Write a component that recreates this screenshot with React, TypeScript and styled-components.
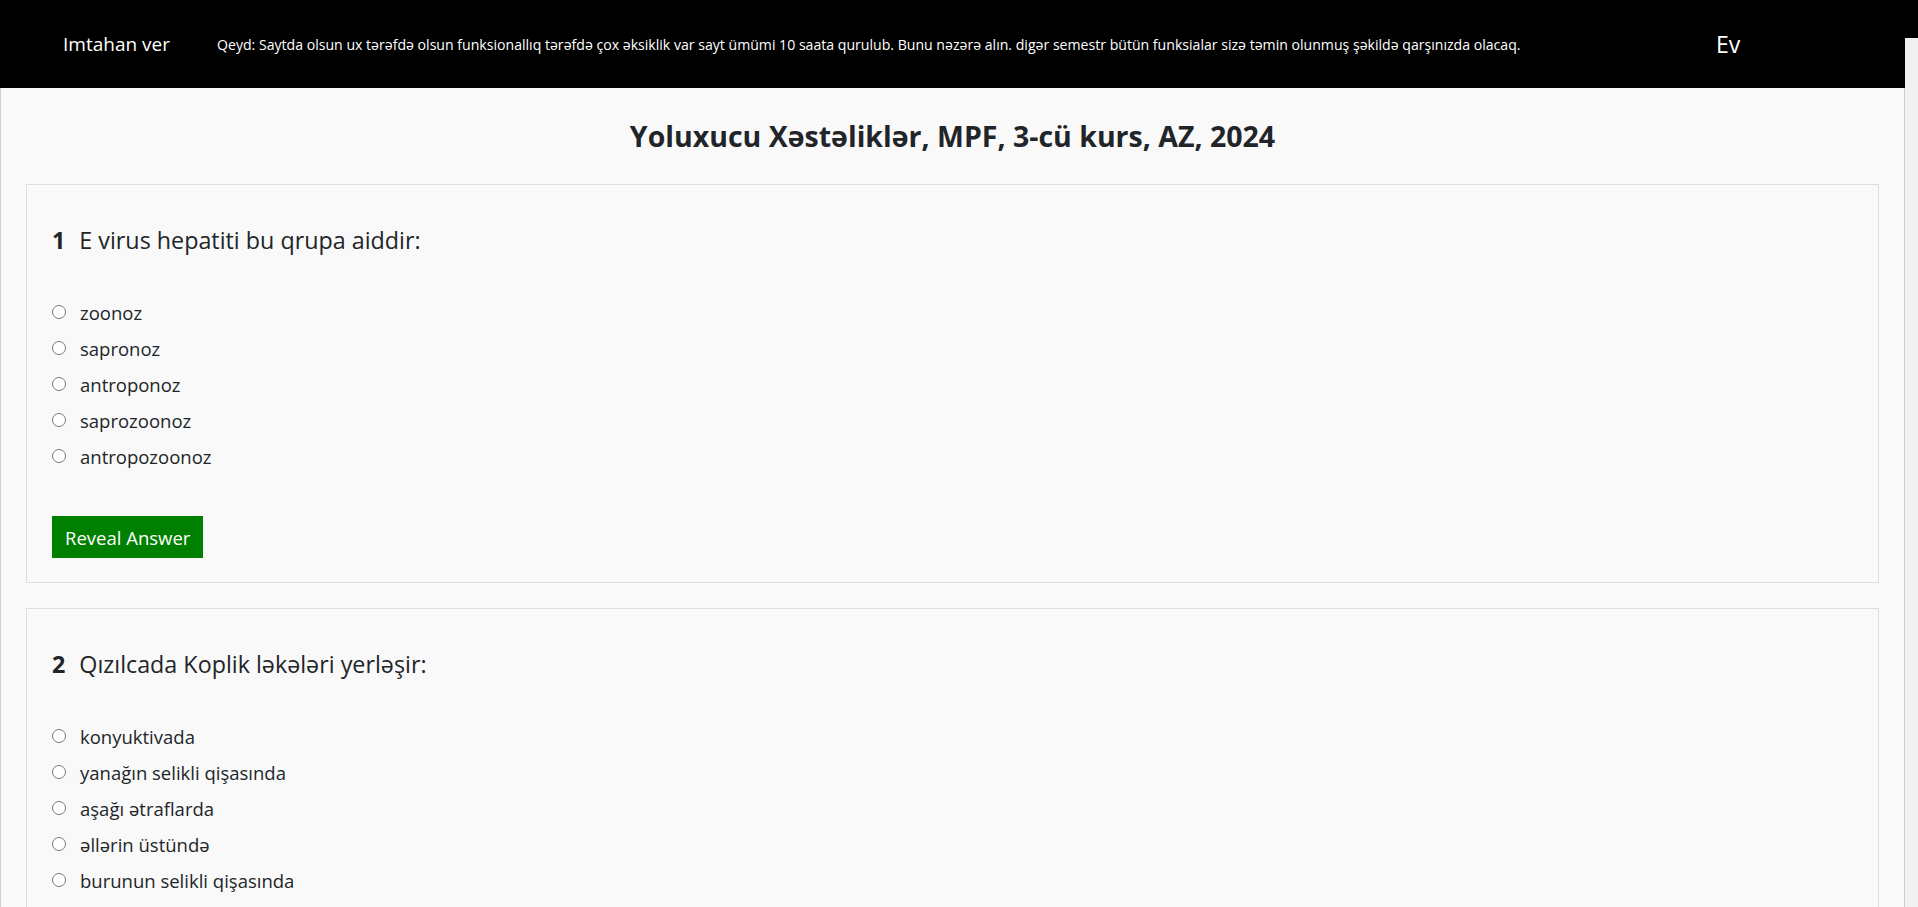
import styled, { createGlobalStyle } from 'styled-components';

const GlobalStyle = createGlobalStyle`
  html, body {
    margin: 0;
    padding: 0;
    overflow: hidden;
    background: #f9f9f9;
  }
  body {
    font-family: 'Open Sans', 'Noto Sans', sans-serif;
    color: #212529;
  }
  * { box-sizing: border-box; }
`;

const Header = styled.header`
  height: 88px;
  background: #000;
  color: #fff;
  display: grid;
  grid-template-columns: 154px 1499px auto;
  align-items: center;
  padding-left: 63px;
`;

const Brand = styled.a`
  font-size: 19px;
  color: #fff;
  text-decoration: none;
  white-space: nowrap;
`;

const Note = styled.p`
  margin: 0;
  font-size: 14.1px;
  white-space: nowrap;
`;

const NavLink = styled.a`
  font-size: 23px;
  color: #fff;
  text-decoration: none;
`;

const ScrollTrack = styled.div`
  position: fixed;
  top: 38px;
  right: 0;
  bottom: 0;
  width: 13px;
  background: #f0f0f0;
`;

const Main = styled.main`
  width: 1905px;
  min-height: calc(100vh - 88px);
  border-left: 1px solid #cfcfcf;
  border-right: 1px solid #cfcfcf;
  padding: 0 25px;
`;

const Title = styled.h1`
  margin: 0;
  height: 96px;
  display: flex;
  align-items: center;
  justify-content: center;
  font-size: 28.5px;
  font-weight: 700;
`;

const Card = styled.section`
  border: 1px solid #dedede;
  padding: 25px 25px 24px;
  margin-bottom: 25px;
`;

const Question = styled.h4`
  margin: 16px 0 39px;
  font-size: 23.3px;
  line-height: 29px;
  font-weight: 400;

  b {
    font-weight: 700;
    margin-right: 14px;
  }
`;

const Options = styled.div`
  display: flex;
  flex-direction: column;
`;

const Option = styled.label`
  height: 36px;
  display: flex;
  align-items: center;
  gap: 14px;
  font-size: 18.5px;

  input {
    margin: 0;
    width: 14px;
    height: 14px;
  }
`;

const RevealButton = styled.button`
  margin-top: 42px;
  height: 42px;
  padding: 0 13px;
  border: 0;
  border-radius: 0;
  background: #008000;
  color: #fff;
  font-family: inherit;
  font-size: 18.5px;
`;

const questions = [
  {
    text: 'E virus hepatiti bu qrupa aiddir:',
    options: ['zoonoz', 'sapronoz', 'antroponoz', 'saprozoonoz', 'antropozoonoz'],
  },
  {
    text: 'Qızılcada Koplik ləkələri yerləşir:',
    options: [
      'konyuktivada',
      'yanağın selikli qişasında',
      'aşağı ətraflarda',
      'əllərin üstündə',
      'burunun selikli qişasında',
    ],
  },
];

export default function App() {
  return (
    <>
      <GlobalStyle />
      <Header>
        <Brand href="#">Imtahan ver</Brand>
        <Note>
          Qeyd: Saytda olsun ux tərəfdə olsun funksionallıq tərəfdə çox əksiklik var sayt ümümi 10 saata qurulub. Bunu
          nəzərə alın. digər semestr bütün funksialar sizə təmin olunmuş şəkildə qarşınızda olacaq.
        </Note>
        <NavLink href="#">Ev</NavLink>
      </Header>
      <ScrollTrack />
      <Main>
        <Title>Yoluxucu Xəstəliklər, MPF, 3-cü kurs, AZ, 2024</Title>
        {questions.map((q, i) => (
          <Card key={i}>
            <Question>
              <b>{i + 1}</b>
              {q.text}
            </Question>
            <Options>
              {q.options.map((o) => (
                <Option key={o}>
                  <input type="radio" name={`q${i}`} />
                  {o}
                </Option>
              ))}
            </Options>
            <RevealButton>Reveal Answer</RevealButton>
          </Card>
        ))}
      </Main>
    </>
  );
}
